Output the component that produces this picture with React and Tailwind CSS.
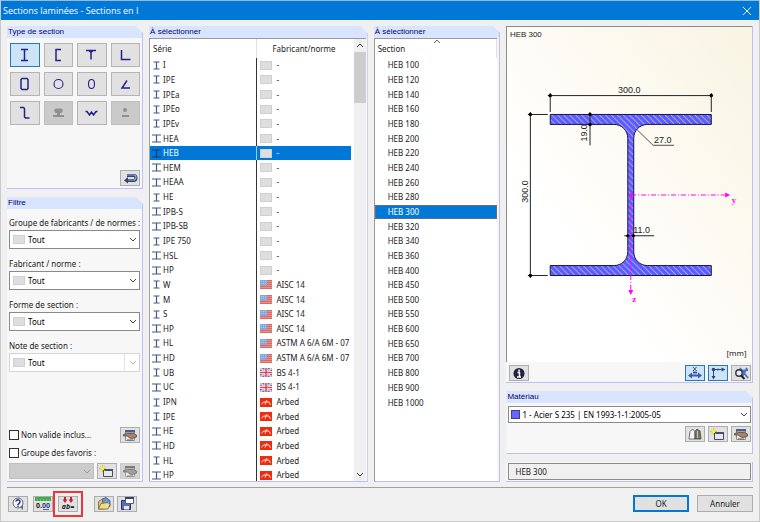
import { useState } from 'react';
import clsx from 'clsx';

const SERIES = [
	[ 'I', 'none' ],
	[ 'IPE', 'none' ],
	[ 'IPEa', 'none' ],
	[ 'IPEo', 'none' ],
	[ 'IPEv', 'none' ],
	[ 'HEA', 'none', true ],
	[ 'HEB', 'none', true ],
	[ 'HEM', 'none', true ],
	[ 'HEAA', 'none', true ],
	[ 'HE', 'none' ],
	[ 'IPB-S', 'none', true ],
	[ 'IPB-SB', 'none', true ],
	[ 'IPE 750', 'none' ],
	[ 'HSL', 'none', true ],
	[ 'HP', 'none', true ],
	[ 'W', 'us', false, 'AISC 14' ],
	[ 'M', 'us', false, 'AISC 14' ],
	[ 'S', 'us', false, 'AISC 14' ],
	[ 'HP', 'us', true, 'AISC 14' ],
	[ 'HL', 'us', false, 'ASTM A 6/A 6M - 07' ],
	[ 'HD', 'us', true, 'ASTM A 6/A 6M - 07' ],
	[ 'UB', 'gb', false, 'BS 4-1' ],
	[ 'UC', 'gb', true, 'BS 4-1' ],
	[ 'IPN', 'arbed', false, 'Arbed' ],
	[ 'IPE', 'arbed', false, 'Arbed' ],
	[ 'HE', 'arbed', true, 'Arbed' ],
	[ 'HD', 'arbed', true, 'Arbed' ],
	[ 'HL', 'arbed', false, 'Arbed' ],
	[ 'HP', 'arbed', true, 'Arbed' ],
];

const SECTIONS = [
	100, 120, 140, 160, 180, 200, 220, 240, 260, 280, 300, 320, 340, 360, 400,
	450, 500, 550, 600, 650, 700, 800, 900, 1000,
];

const TYPES = [
	{ label: 'I', d: 'M7 6.5h7M7 17.5h7M10.5 6.5v11', selected: true },
	{ label: 'U', d: 'M13 6.5h-5v11h5' },
	{ label: 'T', d: 'M5 7.5h10M10 7.5v9M8 7.5l2 2l2 -2' },
	{ label: 'L', d: 'M6.5 7v9.500h9' },
	{ label: 'Rectangle creux', d: 'M8 6.500h5l1 1v9l-1 1h-5l-1 -1v-9z' },
	{
		label: 'Tube',
		thin: true,
		d: 'M10.500 7.500a4.500 4.500 0 1 1 0 9a4.500 4.500 0 1 1 0 -9',
	},
	{ label: 'Ovale', thin: true, d: 'M10.500 7.500c4 0 4 9 0 9s-4 -9 0 -9' },
	{ label: 'Cornière', d: 'M12 8.500l-5 7.500h8' },
	{ label: 'Z', d: 'M6 6.500h3.500l1 1v8.500l1 1h4' },
	{ label: 'Rail', fill: 'M7.500 7.500h6l1.500 2l-1.500 2.500h-1.500v2h4v2h-11v-2h4v-2h-1.500l-1.500 -2.500z' },
	{ label: 'Tôle', d: 'M4.500 10.500h1.500l2.500 3.500l2 -3l2 3l2.500 -3.500h1.500' },
	{ label: 'Rond', fill: 'M10 7a2 2 0 1 1 0 4a2 2 0 1 1 0 -4M7 14h7v2h-7z' },
];

const Panel = ( { title, className, children } ) => (
	<section
		className={ clsx(
			'flex flex-col min-h-0 bg-[#f7f7f7] border-r border-b border-[#bfbff5]',
			title &&
				'[clip-path:polygon(0_0,calc(100%-7px)_0,100%_7px,100%_100%,0_100%)]',
			className
		) }
	>
		{ title && (
			<h2 className="h-3 shrink-0 bg-[#d9e5ff] px-px font-[Liberation_Sans,Arial,sans-serif] text-[8px] leading-3 text-[#00006e]">
				{ title }
			</h2>
		) }
		{ children }
	</section>
);

const IconButton = ( { label, active, disabled, className, children } ) => (
	<button
		type="button"
		aria-label={ label }
		disabled={ disabled }
		className={ clsx(
			'flex h-4 w-5 shrink-0 items-center justify-center border',
			active && 'border-[#2a78b5] bg-[#cce4f7]',
			disabled && 'border-[#bfbfbf] bg-[#cccccc] opacity-80 grayscale',
			! active && ! disabled && 'border-[#adadad] bg-[#e1e1e1]',
			className
		) }
	>
		<svg viewBox="0 0 16 13" className="h-[13px] w-4" fill="none">
			{ children }
		</svg>
	</button>
);

const NewIcon = () => (
	<>
		<path d="M4.500 4.500h9v7h-9z" fill="#e8e8e8" stroke="#444c60" />
		<path d="M5 4h9v2h-9z" fill="#3f4f78" />
		<path d="M3.500 0v7M0 3.500h7M1.500 1.500l4 4M5.500 1.500l-4 4" stroke="#d9c820" />
		<circle cx="3.500" cy="3.500" r="1.800" fill="#f7ee4a" />
	</>
);

const EditIcon = () => (
	<>
		<path d="M3.500 1.500h9v10h-9z" fill="#e6e6e6" stroke="#8a8f9a" />
		<path d="M3 1h10v2.500h-10z" fill="#4a5f82" />
		<path
			d="M1.500 5.500l4 -1h6l3 1.500v2l-4 1.500l-3 -.5l-2 -2h-4z"
			fill="#a98468"
			stroke="#4e4640"
			strokeWidth=".8"
		/>
		<path d="M5 11h6" stroke="#666" />
	</>
);

const Chevron = ( { className } ) => (
	<svg
		viewBox="0 0 8 5"
		fill="none"
		className={ clsx( 'pointer-events-none h-[5px] w-2', className ) }
	>
		<path d="M1 1l3 3l3 -3" stroke="currentColor" />
	</svg>
);

const Flag = ( { kind } ) => {
	if ( kind === 'us' ) {
		return (
			<svg viewBox="0 0 12 9" className="h-[9px] w-3 shrink-0">
				<path d="M0 0h12v9h-12z" fill="#e8908c" />
				<path d="M0 .5h12M0 2.500h12M0 4.500h12M0 6.500h12M0 8.500h12" stroke="#d96a64" />
				<path d="M0 0h7v5.500h-7z" fill="#7fa9dc" />
				<path d="M1 1.500h5M1 3.500h5" stroke="#b3d0f0" strokeDasharray="1 1" />
			</svg>
		);
	}
	if ( kind === 'gb' ) {
		return (
			<svg viewBox="0 0 12 9" className="h-[9px] w-3 shrink-0">
				<path d="M0 0h12v9h-12z" fill="#5a72bc" />
				<path d="M0 0l12 9M12 0l-12 9" stroke="#fff" strokeWidth="1.800" />
				<path d="M0 0l12 9M12 0l-12 9" stroke="#d8535a" strokeWidth=".6" />
				<path d="M6 0v9M0 4.500h12" stroke="#fff" strokeWidth="3" />
				<path d="M6 0v9M0 4.500h12" stroke="#dc4b52" strokeWidth="1.600" />
			</svg>
		);
	}
	if ( kind === 'arbed' ) {
		return (
			<svg viewBox="0 0 12 9" className="h-[9px] w-3 shrink-0" fill="none">
				<path d="M0 0h12v9h-12z" fill="#ee2c10" />
				<path d="M1.500 6.500l2 -2.500h2.500l1 -2M5 6.500l1 -2.500h3l1.500 3" stroke="#ffe3dc" />
			</svg>
		);
	}
	return <span className="h-[9px] w-3 shrink-0 border border-[#d0d0d0] bg-[#dedede]" />;
};

const SelectField = ( { id, label, disabled } ) => (
	<div className="flex flex-col gap-px">
		<label htmlFor={ id } className="h-3 whitespace-nowrap leading-[11px]">
			{ label }
		</label>
		<div className="relative">
			<select
				id={ id }
				disabled={ disabled }
				className={ clsx(
					'block h-[19px] w-full appearance-none border bg-white pl-[18px] text-black opacity-100',
					disabled ? 'border-[#d5d5d5]' : 'border-[#8a8a8a]'
				) }
			>
				<option>Tout</option>
			</select>
			<span className="pointer-events-none absolute left-1 top-[5px] h-[9px] w-3 border border-[#d0d0d0] bg-[#dedede]" />
			{ disabled && (
				<span className="pointer-events-none absolute inset-y-px right-[15px] w-px bg-[#e5e5e5]" />
			) }
			<Chevron
				className={ clsx(
					'absolute right-[3px] top-[7px]',
					disabled ? 'text-[#b5b5b5]' : 'text-[#444]'
				) }
			/>
		</div>
	</div>
);

const TypePanel = () => (
	<Panel title="Type de section" className="h-[163px] shrink-0">
		<div className="grid grid-cols-4 gap-x-1 gap-y-[5px] pl-[3px] pr-0.5 pt-[5px]">
			{ TYPES.map( ( { label, d, thin, fill, selected } ) => (
				<button
					key={ label }
					type="button"
					aria-label={ label }
					disabled={ !! fill }
					className={ clsx(
						'flex h-6 items-center justify-center border',
						selected && 'border-[#2a78b5] bg-[#cce4f7]',
						fill && 'border-[#bfbfbf] bg-[#cacaca]',
						! selected && ! fill && 'border-[#b5b5b5] bg-[#e1e1e1]'
					) }
				>
					<svg viewBox="0 0 21 24" className="h-6 w-[21px] shrink-0" fill="none">
						{ d && (
							<path d={ d } stroke="#22228f" strokeWidth={ thin ? 1.1 : 1.5 } />
						) }
						{ fill && <path d={ fill } fill="#909090" /> }
					</svg>
				</button>
			) ) }
		</div>
		<div className="mt-auto flex justify-end pb-0.5 pr-0.5">
			<IconButton label="Retour">
				<path
					d="M5 3.500h6.500a2 2 0 0 1 0 5h-7.500"
					stroke="#33436e"
					strokeWidth="3"
				/>
				<path d="M5 3h6.500a2 2 0 0 1 0 5h-7" stroke="#8fa8df" strokeWidth="1.200" />
				<path d="M2 8.500l4 -3.500v6.500z" fill="#33436e" />
			</IconButton>
		</div>
	</Panel>
);

const FilterPanel = () => (
	<Panel title="Filtre" className="flex-1">
		<div className="flex flex-col gap-[9px] pl-0.5 pr-0.5 pt-2">
			<SelectField id="maker-group" label="Groupe de fabricants / de normes :" />
			<SelectField id="maker" label="Fabricant / norme :" />
			<SelectField id="shape" label="Forme de section :" />
			<SelectField id="note" label="Note de section :" disabled />
		</div>
		<div className="mt-auto flex flex-col pb-0.5 pl-0.5 pr-0.5">
			<div className="flex items-center justify-between">
				<label className="flex items-center gap-0.5 leading-3">
					<input
						type="checkbox"
						className="size-2.5 appearance-none border border-[#333] bg-white"
					/>
					Non valide inclus...
				</label>
				<IconButton label="Modifier">
					<EditIcon />
				</IconButton>
			</div>
			<label className="mt-1 flex items-center gap-0.5 leading-3">
				<input
					type="checkbox"
					className="size-2.5 appearance-none border border-[#333] bg-white"
				/>
				Groupe des favoris :
			</label>
			<div className="mt-1 flex gap-[3px]">
				<div className="relative min-w-0 flex-1">
					<select
						disabled
						aria-label="Groupe des favoris"
						className="block h-4 w-full appearance-none border border-[#bfbfbf] bg-[#cccccc] opacity-100"
					/>
					<Chevron className="absolute right-[3px] top-1.5 text-[#9a9a9a]" />
				</div>
				<IconButton label="Nouveau groupe">
					<NewIcon />
				</IconButton>
				<IconButton label="Modifier le groupe" disabled>
					<EditIcon />
				</IconButton>
			</div>
		</div>
	</Panel>
);

const SeriesPanel = () => {
	const [ selected, setSelected ] = useState( 6 );

	return (
		<Panel title="À sélectionner">
			<div className="mr-px flex min-h-0 flex-1 overflow-hidden border-l border-t border-[#9a9a9a] bg-white">
				<div className="min-w-0 flex-1">
					<table className="h-[444px] w-full table-fixed border-separate border-spacing-0">
						<colgroup>
							<col className="w-[53%]" />
							<col />
						</colgroup>
						<thead>
							<tr className="h-[19px] text-left">
								<th className="p-0 pl-[3px] font-normal">Série</th>
								<th className="border-l border-[#e0e0e0] p-0 pl-[15px] font-normal">
									Fabricant/norme
								</th>
							</tr>
						</thead>
						<tbody>
							{ SERIES.map( ( [ name, flag, wide, norm = '-' ], index ) => (
								<tr
									key={ index }
									onClick={ () => setSelected( index ) }
									className={ clsx(
										'leading-3',
										index === selected && 'bg-[#0078d7] text-white'
									) }
								>
									<td className="p-0">
										<div className="flex items-center gap-0.5 pl-0.5">
											<svg
												viewBox="0 0 9 9"
												className={ clsx(
													'h-[9px] w-[9px] shrink-0',
													index === selected
														? 'text-[#0b3a78]'
														: 'text-[#46558c]'
												) }
											>
												<path
													d={
														wide
															? 'M0 1h9M0 8h9M4.500 1v7'
															: 'M1.500 1h6M1.500 8h6M4.500 1v7'
													}
													stroke="currentColor"
													strokeWidth="1.200"
												/>
											</svg>
											{ name }
										</div>
									</td>
									<td
										className={ clsx(
											'border-l p-0',
											index === selected
												? 'border-[#9ccbf2]'
												: 'border-[#333]'
										) }
									>
										<div className="flex items-center gap-1 whitespace-nowrap pl-[3px]">
											<Flag kind={ flag } />
											{ norm }
										</div>
									</td>
								</tr>
							) ) }
						</tbody>
					</table>
				</div>
				<div className="ml-[3px] flex w-3 shrink-0 flex-col items-center bg-[#f0f0f0]">
					<Chevron className="mb-1 mt-1 rotate-180 text-[#333]" />
					<div className="h-[51px] w-full bg-[#cdcdcd]" />
					<Chevron className="mb-1 mt-auto text-[#333]" />
				</div>
			</div>
		</Panel>
	);
};

const SectionPanel = () => {
	const [ selected, setSelected ] = useState( 300 );

	return (
		<Panel title="À sélectionner">
			<div className="relative mr-0.5 min-h-0 flex-1 overflow-hidden border-l border-t border-[#9a9a9a] bg-white">
				<Chevron className="absolute left-[58px] top-0 rotate-180 text-[#666]" />
				<table className="h-[371px] w-full border-separate border-spacing-0">
					<thead>
						<tr className="h-[19px] text-left">
							<th className="border-r border-[#e0e0e0] p-0 pl-[3px] font-normal">
								Section
							</th>
						</tr>
					</thead>
					<tbody>
						{ SECTIONS.map( ( size ) => (
							<tr
								key={ size }
								onClick={ () => setSelected( size ) }
								className="leading-3"
							>
								<td
									className={ clsx(
										'border py-0 pl-3 pr-0',
										size === selected
											? 'border-[#5b6f8a] bg-[#0078d7] text-white'
											: 'border-transparent'
									) }
								>
									HEB { size }
								</td>
							</tr>
						) ) }
					</tbody>
				</table>
			</div>
		</Panel>
	);
};

const Drawing = () => (
	<svg
		viewBox="507 27 246 334"
		className="min-h-0 w-full flex-1 border-l border-t border-[#8c8c8c] bg-linear-to-tr from-white from-30% to-[#f9f4e2] font-[Liberation_Sans,Arial,sans-serif] text-[9px]"
		fill="none"
	>
		<defs>
			<pattern id="hatch" width="6" height="6" patternUnits="userSpaceOnUse">
				<path d="M0 0h6v6h-6z" fill="#5c5cff" />
				<path d="M-1 -1l8 8M-1 5l2 2M5 -1l2 2" stroke="#c0c0f4" />
			</pattern>
		</defs>
		<text x="510" y="36" fill="#222" className="text-[8px]">
			HEB 300
		</text>
		<path
			d="M550.500 113.500h162v10h-64c-8 0 -14 6 -14 14v114c0 8 6 14 14 14h64v10h-162v-10h64c8 0 14 -6 14 -14v-114c0 -8 -6 -14 -14 -14h-64z"
			fill="url(#hatch)"
			stroke="#15153a"
		/>
		<g stroke="#222">
			<path d="M548 94.500h166M550.500 92v19M712.500 92v19" />
			<path d="M530.500 111v167M528 113.500h20M528 275.500h20" />
			<path d="M590.500 111v33.500" />
			<path d="M638 129l16 15.500h21" strokeWidth=".8" />
			<path d="M625 235.500h30" />
		</g>
		<g fill="#000">
			<circle cx="550.500" cy="94.500" r="1.800" />
			<circle cx="712.500" cy="94.500" r="1.800" />
			<circle cx="530.500" cy="113.500" r="1.800" />
			<circle cx="530.500" cy="275.500" r="1.800" />
			<circle cx="590.500" cy="113.500" r="1.800" />
			<circle cx="590.500" cy="123.500" r="1.800" />
			<circle cx="628.500" cy="235.500" r="1.600" />
			<circle cx="634" cy="235.500" r="1.600" />
		</g>
		<g fill="#222">
			<text x="630" y="92" textAnchor="middle">300.0</text>
			<text transform="translate(528 191) rotate(-90)" textAnchor="middle">300.0</text>
			<text transform="translate(587 132) rotate(-90)" textAnchor="middle">19.0</text>
			<text x="655" y="142">27.0</text>
			<text x="634" y="233">11.0</text>
			<text x="748" y="356" textAnchor="end" className="font-[Noto_Sans,sans-serif] text-[8px]">
				[mm]
			</text>
		</g>
		<g stroke="#ff00ff" strokeDasharray="5 2 1 2">
			<path d="M632 194.500h95" />
			<path d="M631.500 195v95" />
		</g>
		<g fill="#ff00ff">
			<circle cx="632" cy="194.500" r="1.800" />
			<path d="M726.500 192l5 2.500l-5 2.500zM629 290l2.500 5l2.500 -5z" />
			<text x="733" y="203" className="font-[Liberation_Serif,serif] font-bold">y</text>
			<text x="633" y="302" className="font-[Liberation_Serif,serif] font-bold">z</text>
		</g>
	</svg>
);

const PreviewPanel = () => (
	<Panel className="flex-1">
		<Drawing />
		<div className="flex shrink-0 gap-[3px] pb-px pl-[3px] pr-px pt-[3px]">
			<IconButton label="Informations" className="mr-auto">
				<circle cx="8" cy="6.500" r="5.500" fill="#1d2340" />
				<path d="M8 2.500v2M6.500 5.500h2v4M6 10h4" stroke="#fff" strokeWidth="1.500" />
			</IconButton>
			<IconButton label="Cotation" active>
				<path d="M6 0l3.500 4M9.500 0l-3.500 4" stroke="#44506e" />
				<path d="M3 8.500h10M6 5.500h4" stroke="#3f58a8" strokeWidth="1.800" />
				<path d="M1 8.500l4 -3v6zM15 8.500l-4 -3v6z" fill="#3f58a8" />
			</IconButton>
			<IconButton label="Axes" active>
				<path d="M3.500 2.500h8M3.500 2.500v7" stroke="#33436e" />
				<path d="M11.500 .5l4 2l-4 2zM1.500 9l2 3.500l2 -3.500z" fill="#2d4480" />
				<circle cx="3.500" cy="2.500" r="1.800" fill="#2d4480" />
				<circle cx="8" cy="2.500" r="1" fill="#2d4480" />
			</IconButton>
			<IconButton label="Zoom">
				<path d="M7 1l8 10M14 1l-5 9M7 4l8 -1" stroke="#4a72c8" strokeWidth="1.800" />
				<circle cx="6" cy="6" r="3.200" stroke="#333" strokeWidth="1.400" fill="#e8eefc" />
				<path d="M8 8.500l3.500 3.500" stroke="#222" strokeWidth="2" />
			</IconButton>
		</div>
	</Panel>
);

const MaterialPanel = () => (
	<Panel title="Matériau" className="h-[63px] shrink-0">
		<div className="relative ml-0.5 mr-px mt-[3px]">
			<select
				aria-label="Matériau"
				className="block h-[17px] w-full appearance-none border border-[#8a8a8a] bg-white pl-[13px] text-black"
			>
				<option>1 - Acier S 235 | EN 1993-1-1:2005-05</option>
			</select>
			<span className="pointer-events-none absolute left-[3px] top-1 size-[9px] border border-[#3c3c90] bg-[#6666ff]" />
			<Chevron className="absolute right-[3px] top-1.5 text-[#444]" />
		</div>
		<div className="mt-[3px] flex justify-end gap-[3px] pr-px">
			<IconButton label="Bibliothèque">
				<path d="M3 3.500l2.500 -2.500l2.500 2.500v7.500h-6z" fill="#f4f4f4" stroke="#555" strokeWidth=".8" />
				<path d="M8 3.500l2 -2.500l3 2l1 8h-6z" fill="#7d7468" stroke="#444" strokeWidth=".8" />
				<path d="M10.500 3v7" stroke="#c9c0b2" />
			</IconButton>
			<IconButton label="Nouveau matériau">
				<NewIcon />
			</IconButton>
			<IconButton label="Modifier le matériau">
				<EditIcon />
			</IconButton>
		</div>
	</Panel>
);

const Footer = () => (
	<footer className="mx-1.5 flex h-[34px] shrink-0 items-center border-t border-[#a0a0a0] pb-[3px] pt-px">
		<IconButton label="Aide" className="ml-px">
			<circle cx="8" cy="6" r="5" fill="#f4f7ff" stroke="#667" />
			<path d="M10 10l3 3v-5z" fill="#667" />
			<path d="M6 4.500a2 2 0 1 1 3 2l-1 1v.5M8 8.500v1.500" stroke="#223a8c" strokeWidth="1.500" />
		</IconButton>
		<IconButton label="Unités" className="ml-[5px]">
			<path d="M0 0h16v4h-16z" fill="#3fae49" />
			<path d="M2.500 2v2M5.500 2v2M8.500 2v2M11.500 2v2M14.500 2v2" stroke="#6fce78" strokeWidth=".8" />
			<text x="8" y="11" textAnchor="middle" fill="#222" className="text-[7px] font-bold">
				0.<tspan fill="#2d4480">00</tspan>
			</text>
			<path d="M8 12.500h6" stroke="#2d4480" strokeWidth=".8" />
		</IconButton>
		<IconButton
			label="Renommer"
			className="ml-[5px] outline-2 outline-offset-[3px] outline-[#e8383b]"
		>
			<path d="M5 0v3M11 0v3" stroke="#c2242b" strokeWidth="2" />
			<path d="M2.500 2.500h5l-2.500 3.500zM8.500 2.500h5l-2.500 3.500z" fill="#c2242b" />
			<text x="8" y="12" textAnchor="middle" fill="#222" className="text-[7px] font-bold italic">
				ab=
			</text>
		</IconButton>
		<IconButton label="Ouvrir" className="ml-4">
			<path d="M2.500 4.500l3 -2l3 1v8.500h-6z" fill="#e2c766" stroke="#7a6426" strokeWidth=".8" />
			<path d="M6 2l4 -1.500l4 3v6h-6z" fill="#6f93d8" stroke="#3d5379" strokeWidth=".8" />
			<path d="M2.500 12l2.500 -5.500l7 -1l2 2l-2 4.500z" fill="#f0dc90" stroke="#7a6426" strokeWidth=".8" />
		</IconButton>
		<IconButton label="Enregistrer" className="ml-[3px]">
			<path d="M2.500 3.500h9v9h-9z" fill="#5a6cc0" stroke="#26306b" />
			<path d="M5 9h5v3.500h-5z" fill="#e4e8f8" />
			<path d="M6.500 .5h8v6h-8z" fill="#fff" stroke="#555c70" />
			<path d="M6 0h9v2h-9z" fill="#33436e" />
		</IconButton>
		<div className="ml-auto flex gap-2">
			<button
				type="button"
				className="h-[17px] w-14 border-2 border-[#0078d7] bg-[#e1e1e1] leading-3"
			>
				OK
			</button>
			<button
				type="button"
				className="h-[17px] w-14 border border-[#adadad] bg-[#e1e1e1] leading-3"
			>
				Annuler
			</button>
		</div>
	</footer>
);

const App = () => (
	<div className="flex h-screen flex-col border border-t-0 border-[#c9c9c9] bg-[#f0f0f0] font-[Noto_Sans,Tahoma,sans-serif] text-[8px] text-[#1a1a1a]">
		<header className="flex h-5 shrink-0 items-center justify-between border-t border-[#9db8cc] bg-[#0078d7] pl-0.5 pr-2 text-white">
			<h1 className="font-[Open_Sans,sans-serif] text-[9px] leading-4">
				Sections laminées - Sections en I
			</h1>
			<button type="button" aria-label="Fermer">
				<svg viewBox="0 0 8 8" className="size-2">
					<path d="M0 0l8 8M8 0l-8 8" stroke="#fff" />
				</svg>
			</button>
		</header>
		<main className="grid min-h-0 flex-1 grid-cols-[135fr_219fr_127fr_247fr] grid-rows-1 gap-x-1.5 px-1.5 pb-[5px] pt-1.5">
			<div className="flex min-h-0 flex-col gap-2">
				<TypePanel />
				<FilterPanel />
			</div>
			<SeriesPanel />
			<SectionPanel />
			<div className="flex min-h-0 flex-col gap-2">
				<PreviewPanel />
				<MaterialPanel />
				<Panel className="shrink-0">
					<input
						readOnly
						aria-label="Section choisie"
						value="HEB 300"
						className="ml-0.5 mr-px my-px h-[17px] border border-[#8a8a8a] bg-[#f0f0f0] px-1.5"
					/>
				</Panel>
			</div>
		</main>
		<Footer />
	</div>
);

export default App;
